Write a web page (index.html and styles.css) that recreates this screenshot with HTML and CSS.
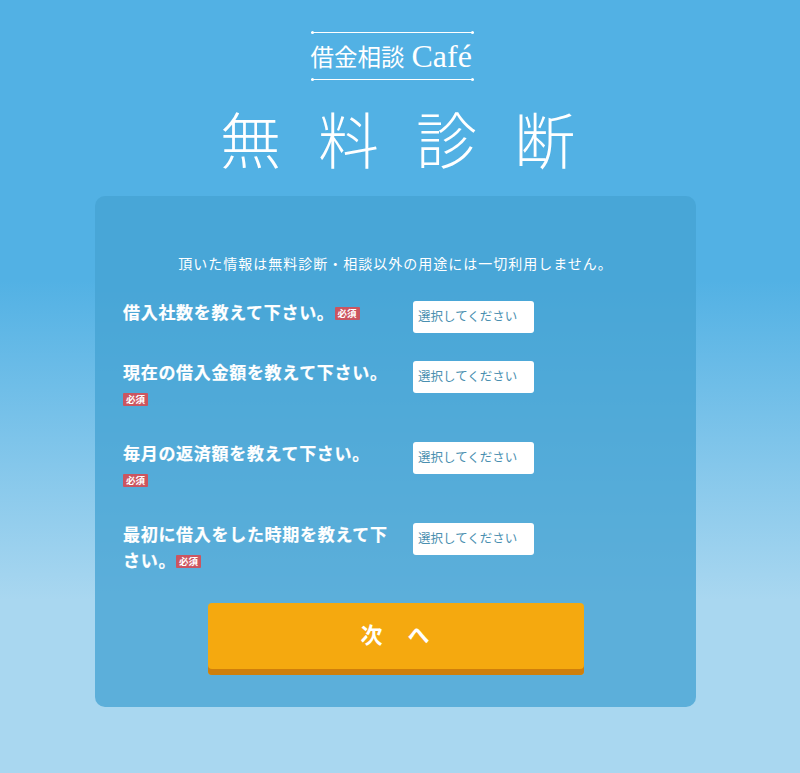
FILE: index.html
```html
<!DOCTYPE html>
<html lang="ja">
  <head>
    <meta charset="UTF-8" />
    <meta name="viewport" content="width=device-width, initial-scale=1.0" />
    <title>無料診断</title>
    <link rel="stylesheet" href="styles.css">
  </head>
  <body>
    <header class="header">
      <div class="logo">
        <div class="logo-rule"></div>
        <div class="logo-text">借金相談<span class="logo-cafe">Café</span></div>
        <div class="logo-rule"></div>
      </div>
      <h1 class="title">無料診断</h1>
    </header>

    <form class="card">
      <p class="notice">頂いた情報は無料診断・相談以外の用途には一切利用しません。</p>

      <div class="row">
        <label class="label">借入社数を教えて下さい。<span class="badge">必須</span></label>
        <select class="select"><option>選択してください</option></select>
      </div>
      <div class="row">
        <label class="label">現在の借入金額を教えて下さい。<span class="badge">必須</span></label>
        <select class="select"><option>選択してください</option></select>
      </div>
      <div class="row">
        <label class="label">毎月の返済額を教えて下さい。<span class="badge">必須</span></label>
        <select class="select"><option>選択してください</option></select>
      </div>
      <div class="row">
        <label class="label">最初に借入をした時期を教えて下さい。<span class="badge">必須</span></label>
        <select class="select"><option>選択してください</option></select>
      </div>

      <button class="next" type="button">次 へ</button>
    </form>
  </body>
</html>
```

FILE: styles.css
```css
body {
  margin: 0;
  height: 773px;
  overflow: hidden;
  background: linear-gradient(#52b1e4 0, #52b1e4 280px, #a9d7f0 600px, #a9d7f0 100%);
  font-family: "Noto Sans CJK JP", "Noto Sans", sans-serif;
  color: #fff;
}
.header {
  display: flex;
  flex-direction: column;
  align-items: center;
  height: 196px;
}
.logo {
  width: 163px;
  margin-top: 32px;
  margin-right: 16px;
}
.logo-rule {
  position: relative;
  border-top: 1px solid #fff;
}
.logo-rule::before,
.logo-rule::after {
  content: "";
  position: absolute;
  top: -2px;
  width: 3px;
  height: 3px;
  border-radius: 50%;
  background-color: #fff;
}
.logo-rule::before {
  left: 0;
}
.logo-rule::after {
  right: 0;
}
.logo-text {
  height: 46px;
  display: flex;
  align-items: center;
  font-size: 23.5px;
  font-weight: 400;
  white-space: nowrap;
}
.logo-cafe {
  margin-left: 7px;
  font-family: "Liberation Serif", serif;
  font-size: 32px;
}
.title {
  margin: 20px 0 0 0;
  padding-left: 32px;
  font-size: 61px;
  font-weight: 300;
  line-height: 76px;
  letter-spacing: 37px;
  white-space: nowrap;
}
.card {
  width: 601px;
  height: 511px;
  box-sizing: border-box;
  margin-left: 95px;
  padding: 56px 28px 0 28px;
  border-radius: 10px;
  background-color: rgba(69, 163, 211, 0.77);
}
.notice {
  margin: 0 0 27px 0;
  font-size: 14px;
  line-height: 22px;
  letter-spacing: 1px;
  text-align: center;
}
.row {
  display: flex;
  align-items: flex-start;
  min-height: 60px;
}
.label {
  width: 270px;
  margin: -2px 20px 0 0;
  padding-bottom: 31px;
  font-size: 17px;
  font-weight: bold;
  line-height: 26px;
  letter-spacing: 0.7px;
  -webkit-text-stroke: 0.2px #fff;
}
.badge {
  display: inline-block;
  width: 25px;
  height: 13px;
  border-radius: 1px;
  background-color: #cb5560;
  font-size: 9.5px;
  line-height: 13px;
  letter-spacing: 0;
  text-align: center;
  vertical-align: 2px;
  -webkit-text-stroke: 0;
}
.select {
  width: 121px;
  height: 32px;
  padding: 0 5px 3px 5px;
  border: 0;
  border-radius: 3px;
  background-color: #fff;
  appearance: none;
  color: #4a8fb0;
  font-family: inherit;
  font-size: 12.5px;
}
.next {
  display: block;
  width: 376px;
  height: 72px;
  margin: -1px 0 0 85px;
  padding: 0 0 12px 0;
  border: 0;
  border-radius: 4px;
  background-color: #f5a90f;
  box-shadow: inset 0 -6px 0 #cf7f0c;
  color: #fff;
  font-family: inherit;
  font-size: 22px;
  font-weight: bold;
  letter-spacing: 2px;
  word-spacing: 16px;
}
```
